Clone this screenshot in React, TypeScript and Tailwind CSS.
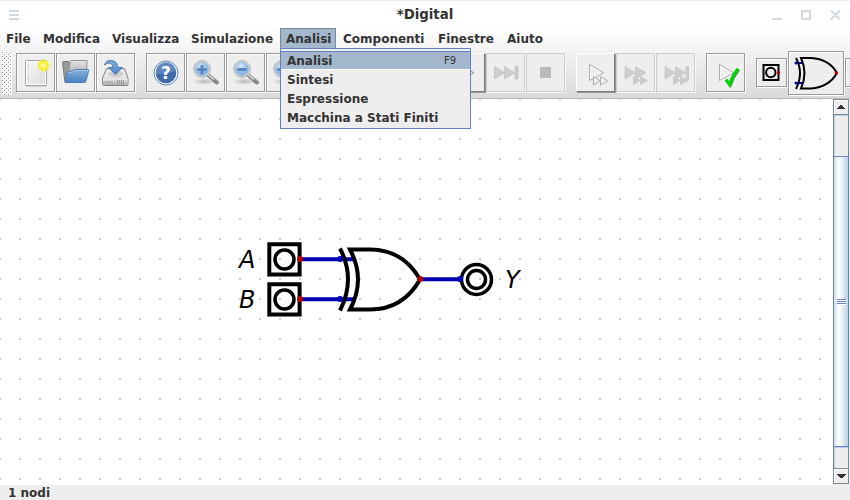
import type { ReactNode } from "react";

const menus = [
  { label: "File", width: "w-[37px]" },
  { label: "Modifica", width: "w-[69px]" },
  { label: "Visualizza", width: "w-[79px]" },
  { label: "Simulazione", width: "w-[95px]" },
  { label: "Analisi", width: "w-[56px]" },
  { label: "Componenti", width: "w-[95px]" },
  { label: "Finestre", width: "w-[69px]" },
  { label: "Aiuto", width: "w-[60px]" },
];

const entries = [
  { label: "Analisi", key: "F9" },
  { label: "Sintesi" },
  { label: "Espressione" },
  { label: "Macchina a Stati Finiti" },
];

function Button({ children, kind = "normal", size = "h-[39px] w-[39px]" }: { children?: ReactNode; kind?: "normal" | "disabled" | "raised"; size?: string }) {
  const look =
    kind === "normal"
      ? "border border-[#999] bg-[#eee] shadow-[1px_1px_0_#fff,inset_1px_1px_0_#fff]"
      : kind === "disabled"
        ? "border border-[#ccc] bg-[#eee] shadow-[1px_1px_0_#f8f8f8]"
        : "border border-t-white border-l-white border-r-[#7a7a7a] border-b-[#7a7a7a] bg-[#eee] shadow-[1px_1px_0_#999]";
  return <div className={`flex shrink-0 items-center justify-center ${size} ${look}`}>{children}</div>;
}

function Defs() {
  return (
    <svg className="absolute h-0 w-0">
      <defs>
        <linearGradient id="paper" x1="0" y1="0" x2="1" y2="1">
          <stop offset="0" stopColor="#f9f9f9" /><stop offset="1" stopColor="#dcdcdc" />
        </linearGradient>
        <radialGradient id="sun">
          <stop offset="0" stopColor="#fffff0" /><stop offset=".3" stopColor="#fff66b" />
          <stop offset=".65" stopColor="#f7ef20" /><stop offset="1" stopColor="#f7ef20" stopOpacity="0" />
        </radialGradient>
        <linearGradient id="blue" x1="0" y1="0" x2="0" y2="1">
          <stop offset="0" stopColor="#86b0dc" /><stop offset="1" stopColor="#4a83c4" />
        </linearGradient>
        <linearGradient id="metal" x1="0" y1="0" x2="0" y2="1">
          <stop offset="0" stopColor="#eee" /><stop offset="1" stopColor="#aaa" />
        </linearGradient>
        <radialGradient id="lens" cx=".4" cy=".3">
          <stop offset="0" stopColor="#d8e9fb" /><stop offset="1" stopColor="#8db7e6" />
        </radialGradient>
        <radialGradient id="shade">
          <stop offset="0" stopColor="#000" stopOpacity=".22" /><stop offset="1" stopColor="#000" stopOpacity="0" />
        </radialGradient>
      </defs>
    </svg>
  );
}

function Icon({ children }: { children: ReactNode }) {
  return <svg width="33" height="33" viewBox="0 0 33 33" fill="none" className="shrink-0">{children}</svg>;
}

function NewIcon() {
  return (
    <Icon>
      <path d="M6 30h22" stroke="#000" strokeWidth="2" opacity=".12" />
      <rect x="6.500" y="4.500" width="21" height="25" rx="1.500" fill="url(#paper)" stroke="#a3a3a3" />
      <rect x="7.500" y="5.500" width="19" height="23" stroke="#fff" />
      <path d="M9.500 6v22" stroke="#ddd" />
      <path d="M8 10h1M8 23h1" stroke="#aaa" />
      <circle cx="24.300" cy="9.500" r="6.700" fill="url(#sun)" />
    </Icon>
  );
}

function OpenIcon() {
  return (
    <Icon>
      <path d="M3.500 6.500q0-1 1-1h5l1 2h6l1 19H6z" fill="#999" stroke="#777" />
      <path d="M9 17L11.500 4.500H28L27.500 17z" fill="url(#metal)" stroke="#909090" />
      <path d="M12 7h14M11.500 9h14" stroke="#d0d0d0" />
      <path d="M9.500 15.500q4 0 7-2h12.500q1 0 .8 1l-3 11q-.3 1-1.300 1H7q-1 0-.8-1l2-9q.3-1 1.300-1z" fill="url(#blue)" stroke="#4a7db8" />
      <path d="M10 16.500q4 0 7-2h12" stroke="#a9c8e8" />
    </Icon>
  );
}

function SaveIcon() {
  return (
    <Icon>
      <path d="M7.500 12.500h18l3.500 9.500v6.500q0 1-1 1H4.500q-1 0-1-1V22z" fill="#ddd" stroke="#888" />
      <path d="M8.500 14h16l2.500 7H5.500z" fill="#ececec" />
      <ellipse cx="16.500" cy="18" rx="8" ry="3" fill="#cdcdcd" />
      <path d="M4 22.500h24.500V29H4z" fill="url(#metal)" />
      <path d="M6 26h8M18.500 24v4M20.500 24v4M22.500 24v4M24.500 24v4" stroke="#999" />
      <path d="M5.500 9Q7 4.500 11 4.500q7-.5 8 7h4.500l-7 7-7-7H14q-.5-4.500-4-4.500-2 0-4.500 2z" fill="url(#blue)" stroke="#4a7ab5" />
    </Icon>
  );
}

function HelpIcon() {
  return (
    <Icon>
      <circle cx="17" cy="17" r="12" fill="#fff" stroke="#5f86b8" />
      <circle cx="17" cy="17" r="10.300" fill="#3f6bab" />
      <path d="M7 18A10 10 0 0 1 27 14Q22 18 7 18z" fill="#6b91c2" opacity=".7" />
      <text x="17" y="23" textAnchor="middle" className="fill-white font-['DejaVu_Sans'] text-[17px] font-bold">?</text>
    </Icon>
  );
}

function ZoomIcon({ plus = true }: { plus?: boolean }) {
  return (
    <Icon>
      <ellipse cx="15.500" cy="25.500" rx="12" ry="3.500" fill="url(#shade)" />
      <path d="M18.500 18.500L28 26.500" stroke="#8a8a8a" strokeWidth="4" strokeLinecap="round" />
      <path d="M18.500 18L28 26" stroke="#ddd" strokeWidth="1.600" />
      <path d="M24.500 24l3.500 3" stroke="#888" strokeWidth="3" />
      <circle cx="13" cy="13" r="8.300" fill="#e9efef" stroke="#a4aaa8" />
      <circle cx="13" cy="13" r="6.700" fill="url(#lens)" stroke="#8baac9" strokeWidth=".7" />
      <path d={plus ? "M8.500 13.500h9M13 9v9" : "M8.500 13.500h9"} stroke="#5685bf" strokeWidth="3" />
    </Icon>
  );
}

function PlayIcon() {
  return (
    <Icon>
      <path d="M10.500 8.500v16L25 16.800z" fill="#eee" stroke="#888" strokeWidth=".9" />
    </Icon>
  );
}

function ForwardIcon() {
  return (
    <svg width="29" height="29" viewBox="0 0 29 29" className="shrink-0">
      <path d="M3.500 8.500l10 6.300-10 6.200zM13.500 8.500l10 6.300-10 6.200z" fill="#cecece" stroke="#c6c6c6" />
      <path d="M24 8.500h3v12.500h-3z" fill="#ccc" stroke="#c2c2c2" strokeWidth=".8" />
    </svg>
  );
}

function RunIcon({ check = false }: { check?: boolean }) {
  return (
    <Icon>
      <path d="M10.500 8.500v16L24.500 16.800z" fill="#eee" stroke="#999" strokeWidth=".8" />
      <path d="M11.500 10.500v12L22.500 16.800z" stroke="#fff" strokeWidth=".8" />
      {check ? (
        <>
          <path d="M17.500 24.500l4 5Q24.500 20.500 30 13.500" stroke="#777" strokeWidth="2.500" />
          <path d="M16.800 23.500l3.700 5Q23.500 19.500 29 12.800" stroke="#00d700" strokeWidth="3.200" />
        </>
      ) : (
        <path d="M14.500 20.500v8.500l6.500-4.200zm7 0v8.500l7-4.200z" fill="#f3f3f1" stroke="#999" strokeWidth=".8" />
      )}
    </Icon>
  );
}

function FastIcon({ stop = false }: { stop?: boolean }) {
  return (
    <Icon>
      <path d="M6 10.500v12.500l10.500-6.200zM16.500 10.500v12.500L27 16.800z" fill="#cecece" stroke="#c6c6c6" strokeWidth=".8" />
      {stop && <path d="M27 10.500h2.500V23H27z" fill="#ccc" stroke="#c2c2c2" strokeWidth=".8" />}
      <path d="M14.500 20.500v8l6.500-4zm7 0v8l7-4z" fill="#ccc" stroke="#c4c4c4" strokeWidth=".8" />
      {stop && <path d="M27 21h2.500v3.500L27 27z" fill="#ccc" />}
    </Icon>
  );
}

function Grip() {
  return (
    <svg width="10" height="44" shapeRendering="crispEdges" className="-mt-[2px] ml-[2px] shrink-0 bg-[#f8f8f8]">
      <defs>
        <pattern id="grip" width="4" height="4" patternUnits="userSpaceOnUse">
          <path d="M0 1h1v1H0zM2 3h1v1H2z" fill="#8c8c8c" />
        </pattern>
      </defs>
      <path d="M0 0h10v44H0z" fill="url(#grip)" />
    </svg>
  );
}

function Toolbar() {
  return (
    <div className="flex h-[49px] items-start overflow-hidden pt-1">
      <Grip />
      <div className="ml-1 flex gap-px">
        <Button><NewIcon /></Button>
        <Button><OpenIcon /></Button>
        <Button><SaveIcon /></Button>
      </div>
      <div className="ml-[11px] flex gap-px">
        <Button><HelpIcon /></Button>
        <Button><ZoomIcon /></Button>
        <Button><ZoomIcon plus={false} /></Button>
        <Button><ZoomIcon /></Button>
      </div>
      <div className="ml-[141px] flex gap-px">
        <Button kind="raised"><PlayIcon /></Button>
        <Button kind="disabled"><ForwardIcon /></Button>
        <Button kind="disabled"><div className="h-[11px] w-[11px] bg-[#b9b9b9]" /></Button>
      </div>
      <div className="ml-[11px] flex gap-px">
        <Button kind="raised"><RunIcon /></Button>
        <Button kind="disabled"><FastIcon /></Button>
        <Button kind="disabled"><FastIcon stop /></Button>
      </div>
      <div className="ml-[11px]"><Button><RunIcon check /></Button></div>
      <div className="mt-[5px] ml-[11px]">
        <Button size="h-[29px] w-[31px]">
          <svg width="21" height="21" viewBox="0 0 21 21">
            <rect x="2.500" y="3" width="15" height="15" fill="none" stroke="#000" strokeWidth="2" />
            <circle cx="9.800" cy="10.500" r="4.700" fill="none" stroke="#000" strokeWidth="2" />
            <circle cx="17.500" cy="10.500" r="1.500" fill="#c00000" />
          </svg>
        </Button>
      </div>
      <div className="-mt-[2px] ml-px">
        <Button size="h-[44px] w-[56px]">
          <svg width="54" height="42" viewBox="0 0 54 42" className="shrink-0">
            <path d="M6 11h8M6 31h8" stroke="#0000b9" strokeWidth="2" />
            <circle cx="7" cy="11" r="1.500" fill="#0000b9" /><circle cx="7" cy="31" r="1.500" fill="#0000b9" />
            <path d="M7 6q8 15 0 31" fill="none" stroke="#000" strokeWidth="2" />
            <path d="M12 6h10q18 1 26 15-8 14-26 15.500H12q7-15.500 0-30.500z" fill="none" stroke="#000" strokeWidth="2" />
            <circle cx="47.300" cy="21" r="1.700" fill="#c00000" />
          </svg>
        </Button>
      </div>
      <div className="mt-[5px] ml-px"><Button size="h-[29px] w-[31px]" /></div>
    </div>
  );
}

function Circuit() {
  return (
    <svg width="833" height="386" viewBox="0 99 833 386" className="block">
      <g stroke="#0000b2" strokeWidth="4">
        <path d="M300 259.300h54M300 299.300h54M420 279.300h41" />
      </g>
      <g fill="none" stroke="#000" strokeWidth="4">
        <path d="M269.300 244.300h30.300v30.300h-30.300zM269.300 284.300h30.300v30.300h-30.300z" />
        <circle cx="284.500" cy="259.500" r="9.500" strokeWidth="3.500" />
        <circle cx="284.500" cy="299.500" r="9.500" strokeWidth="3.500" />
        <path d="M340 248.500Q356 279 340 310.500" />
        <path d="M350 249.500H370Q403 249.500 420 279.500Q403 309.500 370 309.500H350Q366 279.500 350 249.500z" />
        <circle cx="476.500" cy="279.500" r="15" strokeWidth="3.500" />
        <circle cx="476.500" cy="279.500" r="9" strokeWidth="3.500" />
      </g>
      <g fill="#b20000">
        <circle cx="300" cy="259" r="3" /><circle cx="300" cy="299" r="3" /><circle cx="420" cy="279" r="3" />
      </g>
      <g fill="#0000b2">
        <circle cx="340" cy="259" r="3" /><circle cx="340" cy="299" r="3" /><circle cx="460" cy="279" r="3" />
      </g>
      <g className="font-['DejaVu_Sans'] text-[24px] font-normal italic" fill="#000">
        <text x="239" y="268">A</text>
        <text x="239" y="308">B</text>
        <text x="505" y="288">Y</text>
      </g>
    </svg>
  );
}

function Scrollbar() {
  return (
    <div className="flex h-[385px] w-[16px] flex-col border-x border-[#7a8a99] bg-[#eee]">
      <div className="flex h-4 shrink-0 items-center justify-center border-y border-[#7a8a99] bg-[#eee] shadow-[inset_1px_1px_0_#fff]">
        <svg width="8" height="4" viewBox="0 0 8 4" shapeRendering="crispEdges"><path d="M3 0h2v1h1v1h1v1h1v1H0V3h1V2h1V1h1z" fill="#333" /></svg>
      </div>
      <div className="h-[41px] shrink-0 border-t border-l border-[#b8cfe5]" />
      <div className="-mx-px flex h-[291px] shrink-0 items-center justify-center border border-[#6382bf] bg-[linear-gradient(90deg,#c8ddf2_0px,#e0ebf6_2px,#fff_4px,#f8fbfe_6px,#b8cfe5_14px)]">
        <div className="flex flex-col gap-px">
          <div className="h-px w-[9px] bg-[#6382bf] shadow-[1px_1px_0_#fff]" />
          <div className="h-px w-[9px] bg-[#6382bf] shadow-[1px_1px_0_#fff]" />
          <div className="h-px w-[9px] bg-[#6382bf] shadow-[1px_1px_0_#fff]" />
        </div>
      </div>
      <div className="h-[21px] shrink-0 border-t border-l border-[#b8cfe5]" />
      <div className="flex h-4 shrink-0 items-center justify-center border-y border-[#7a8a99] pl-px shadow-[inset_1px_1px_0_#fff]">
        <svg width="9" height="4" viewBox="0 0 9 4" shapeRendering="crispEdges"><path d="M0 0h9v1H8v1H7v1H6v1H3V3H2V2H1V1H0z" fill="#333" /></svg>
      </div>
    </div>
  );
}

export default function App() {
  return (
    <div className="relative flex h-[500px] w-[850px] flex-col overflow-hidden bg-[#eee] font-['DejaVu_Sans',sans-serif] text-[12px] font-bold text-[#333]">
      <Defs />
      <header className="grid h-[28px] shrink-0 grid-cols-3 items-center border-t border-[#eee] bg-white">
        <div className="ml-[9px] flex w-[10px] flex-col gap-[2px]">
          <div className="h-[2px] bg-[#d3dadd]" /><div className="h-[2px] bg-[#d3dadd]" /><div className="h-[2px] bg-[#d3dadd]" />
        </div>
        <h1 className="text-center text-[13.33px] leading-[20px]">*Digital</h1>
        <svg width="74" height="20" viewBox="770 4 74 20" className="ml-auto mr-[6px]" fill="none" stroke="#d3dadd" strokeWidth="2">
          <path d="M772 18h10M802 10h8v8h-8zM831 9.500l9 9M840 9.500l-9 9" />
        </svg>
      </header>
      <div className="h-[70px] shrink-0 bg-linear-to-b from-white to-[#dadada]">
        <nav className="flex h-[21px] items-stretch">
          {menus.map((m) => (
            <div key={m.label} className={`shrink-0 pt-[3px] pl-[6px] leading-[16px] ${m.width} ${m.label === "Analisi" ? "mr-px border border-b-0 border-[#7a8a99] bg-[#a3b8cc] !pt-[2px] !pl-[5px]" : ""}`}>
              {m.label}
            </div>
          ))}
        </nav>
        <Toolbar />
      </div>
      <div className="h-px shrink-0 bg-[#bbb]" />
      <main className="flex h-[386px] shrink-0">
        <div className="w-[833px] shrink-0 bg-white bg-[linear-gradient(90deg,#fff_18px,transparent_18px),linear-gradient(#ccc_2px,transparent_2px)] bg-[length:20px_20px] bg-[position:1px_0,0_-1px]">
          <Circuit />
        </div>
        <Scrollbar />
      </main>
      <footer className="h-[15px] shrink-0 pl-2 leading-[16px]">1 nodi</footer>
      <div className="absolute top-[48px] left-[280px] h-[81px] w-[191px] border border-[#6382bf] bg-[#eee] pt-[2px]">
        {entries.map((e) => (
          <div key={e.label} className={`flex h-[19px] items-center border-y pr-[14px] pl-[6px] ${e.key ? "border-t-[#6382bf] border-b-white bg-[#a3b8cc]" : "border-transparent"}`}>
            <span>{e.label}</span>
            {e.key && <span className="ml-auto text-[10px] font-normal">{e.key}</span>}
          </div>
        ))}
      </div>
    </div>
  );
}
